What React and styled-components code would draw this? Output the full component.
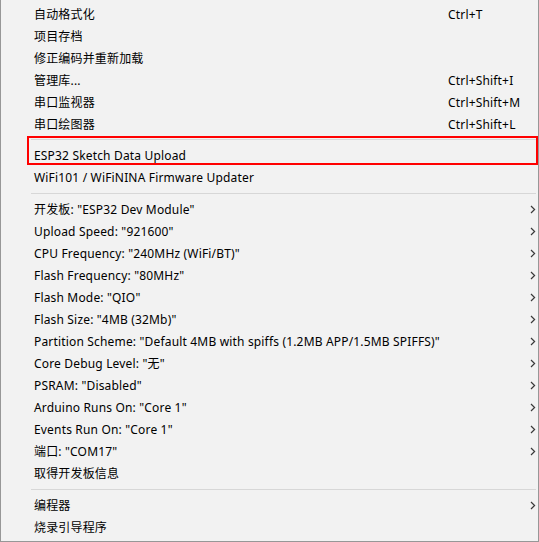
import React from 'react'
import styled, { createGlobalStyle } from 'styled-components'

const GlobalStyle = createGlobalStyle`
	html, body {
		margin: 0;
		padding: 0;
		background: #f2f2f2;
	}
`

const groups = [
	[
		{ label: '自动格式化', shortcut: 'Ctrl+T' },
		{ label: '项目存档' },
		{ label: '修正编码并重新加载' },
		{ label: '管理库...', shortcut: 'Ctrl+Shift+I' },
		{ label: '串口监视器', shortcut: 'Ctrl+Shift+M' },
		{ label: '串口绘图器', shortcut: 'Ctrl+Shift+L' },
	],
	[
		{ label: 'ESP32 Sketch Data Upload', marked: true },
		{ label: 'WiFi101 / WiFiNINA Firmware Updater' },
	],
	[
		{ label: '开发板: "ESP32 Dev Module"', sub: true },
		{ label: 'Upload Speed: "921600"', sub: true },
		{ label: 'CPU Frequency: "240MHz (WiFi/BT)"', sub: true },
		{ label: 'Flash Frequency: "80MHz"', sub: true },
		{ label: 'Flash Mode: "QIO"', sub: true },
		{ label: 'Flash Size: "4MB (32Mb)"', sub: true },
		{ label: 'Partition Scheme: "Default 4MB with spiffs (1.2MB APP/1.5MB SPIFFS)"', sub: true },
		{ label: 'Core Debug Level: "无"', sub: true },
		{ label: 'PSRAM: "Disabled"', sub: true },
		{ label: 'Arduino Runs On: "Core 1"', sub: true },
		{ label: 'Events Run On: "Core 1"', sub: true },
		{ label: '端口: "COM17"', sub: true },
		{ label: '取得开发板信息' },
	],
	[
		{ label: '编程器', sub: true },
		{ label: '烧录引导程序' },
	],
]

const Chevron = () => (
	<svg width="6" height="9" viewBox="0 0 6 9">
		<path d="M1 1 L4.6 4.5 L1 8" fill="none" stroke="#3a3a3a" strokeWidth="1.2" />
	</svg>
)

const App = () => (
	<>
		<GlobalStyle />
		<Menu>
			{groups.map((items, g) => (
				<React.Fragment key={g}>
					{g > 0 && <Separator $before={g === 1 ? 4 : 5} />}
					{items.map(item => (
						<Item key={item.label} $marked={item.marked}>
							<Label>{item.label}</Label>
							<Shortcut>{item.shortcut}</Shortcut>
							<Arrow>{item.sub && <Chevron />}</Arrow>
						</Item>
					))}
				</React.Fragment>
			))}
		</Menu>
	</>
)

const Menu = styled.div`
	background: #f2f2f2;
	border: 1px solid #979797;
	border-top: none;
	box-sizing: border-box;
	color: #000;
	font: 12px 'Noto Sans', 'Noto Sans CJK SC', sans-serif;
	height: 542px;
	letter-spacing: 0.17px;
	padding: 3px 0 0;
	width: 539px;
`

const Separator = styled.div`
	border-top: 1px solid #d7d7d7;
	margin: ${p => p.$before}px 2px 4px 30px;
`

const Item = styled.div`
	align-items: center;
	display: grid;
	grid-template-columns: 1fr 76px 14px;
	height: 22px;
	padding-left: 33px;
	position: relative;

	${p =>
		p.$marked &&
		`
		::after {
			border: 2px solid #f00;
			bottom: 1px;
			content: '';
			left: 26px;
			position: absolute;
			right: 0;
			top: -8px;
		}
	`}
`

const Label = styled.span`
	white-space: nowrap;
`

const Shortcut = styled.span`
	white-space: nowrap;
`

const Arrow = styled.span`
	display: flex;
	padding-left: 6px;
`

export default App
